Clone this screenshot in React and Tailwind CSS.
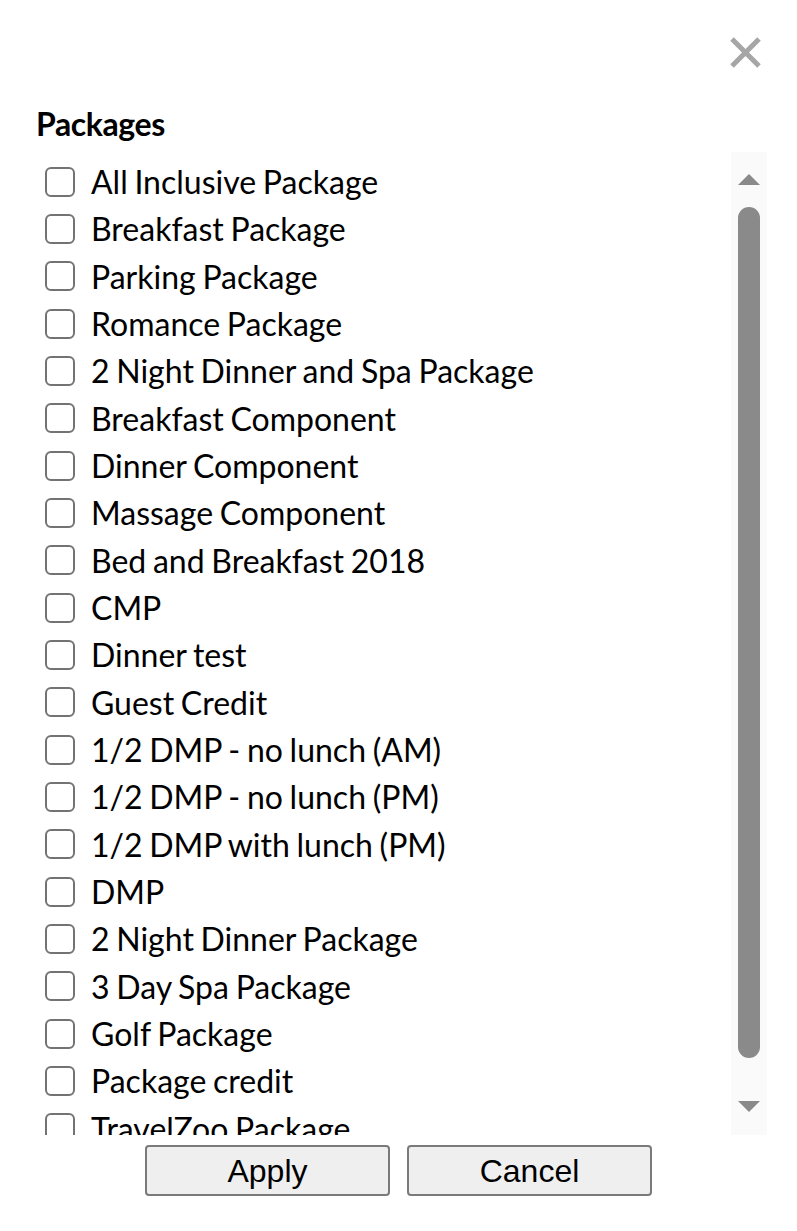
import React from "react";

const packages = [
  "All Inclusive Package",
  "Breakfast Package",
  "Parking Package",
  "Romance Package",
  "2 Night Dinner and Spa Package",
  "Breakfast Component",
  "Dinner Component",
  "Massage Component",
  "Bed and Breakfast 2018",
  "CMP",
  "Dinner test",
  "Guest Credit",
  "1/2 DMP - no lunch (AM)",
  "1/2 DMP - no lunch (PM)",
  "1/2 DMP with lunch (PM)",
  "DMP",
  "2 Night Dinner Package",
  "3 Day Spa Package",
  "Golf Package",
  "Package credit",
  "TravelZoo Package",
  "Wine Package",
];

function CloseIcon() {
  return (
    <svg width="33" height="33" viewBox="0 0 33 33">
      <path d="M3 3 L30 30 M30 3 L3 30" stroke="#a6a6a6" strokeWidth="5" strokeLinecap="butt" />
    </svg>
  );
}

function Scrollbar() {
  return (
    <div className="w-[36px] h-full bg-[#fafafa] flex flex-col items-center pt-[22px] pb-[23px]">
      <svg width="22" height="11" viewBox="0 0 22 11">
        <polygon points="11,0 22,11 0,11" fill="#8a8a8a" />
      </svg>
      <div className="w-[22px] h-[851px] mt-[22px] rounded-full bg-[#8a8a8a]" />
      <div className="flex-1" />
      <svg width="22" height="11" viewBox="0 0 22 11">
        <polygon points="0,0 22,0 11,11" fill="#8a8a8a" />
      </svg>
    </div>
  );
}

export default function App() {
  return (
    <div className="w-[797px] h-[1231px] bg-white flex flex-col" style={{ fontFamily: "Lato, 'Noto Sans', sans-serif" }}>
      <div className="flex justify-end pt-[36px] pr-[35px]">
        <CloseIcon />
      </div>

      <h2 className="mt-[36px] ml-[36px] text-[32px] leading-[38px] font-bold text-black tracking-[-0.4px]">Packages</h2>

      <div className="flex mt-[9px] ml-[36px] mr-[30px] h-[983px]">
        <div className="flex-1 overflow-hidden pt-[6px] pl-[9px]">
          {packages.map((name) => (
            <label key={name} className="flex items-center gap-[16px] h-[47.33px] text-[32px] leading-[47px] text-black whitespace-nowrap [word-spacing:-1.5px]">
              <span className="w-[30px] h-[30px] shrink-0 border-2 border-[#737373] rounded-[6px] bg-white" />
              <span>{name}</span>
            </label>
          ))}
        </div>
        <Scrollbar />
      </div>

      <div className="flex justify-center gap-[17px] mt-[10px]" style={{ fontFamily: "'Liberation Sans', Arial, sans-serif" }}>
        <button className="w-[245px] h-[51px] bg-[#efefef] border-2 border-[#7a7a7a] rounded-[4px] text-[32px] leading-none text-black">Apply</button>
        <button className="w-[245px] h-[51px] bg-[#efefef] border-2 border-[#7a7a7a] rounded-[4px] text-[32px] leading-none text-black">Cancel</button>
      </div>
    </div>
  );
}
